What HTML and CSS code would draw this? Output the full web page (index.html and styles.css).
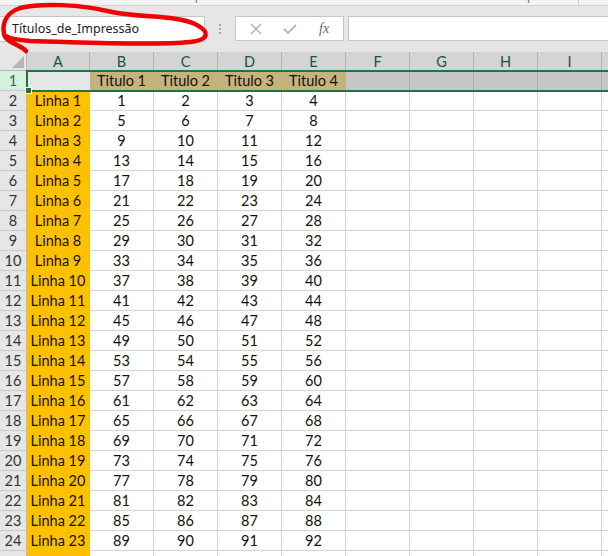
FILE: index.html
```html
<!DOCTYPE html>
<html lang="pt">
<head>
<meta charset="utf-8">
<link rel="stylesheet" href="styles.css">
</head>
<body>
<div class="app">
  <div class="ribbon">
    <span class="grp g1">Área de Transferência</span><span class="launch l1">⌐</span>
    <span class="grp g2">Tipo de Letra</span><span class="launch l2">⌐</span>
    <span class="grp g3">Alinhamento</span><span class="launch l3">⌐</span>
    <span class="grp g4">Comportamento</span><span class="sep"></span>
  </div>
  <div class="toolbar">
    <div class="namebox">Títulos_de_Impressão</div>
    <div class="dots"><i></i><i></i><i></i></div>
    <div class="fbtns">
      <svg class="ico" width="14" height="14" viewBox="0 0 14 14"><path d="M2 2 L12 12 M12 2 L2 12" stroke="#b8b8b8" stroke-width="1.6" fill="none"/></svg>
      <svg class="ico" width="16" height="14" viewBox="0 0 16 14"><path d="M2 7 L6 11 L14 3" stroke="#b8b8b8" stroke-width="1.8" fill="none"/></svg>
      <span class="fx">fx</span>
    </div>
    <div class="finput"></div>
  </div>
  <div class="sheet">
    <div class="grid">
      <div class="corner"><svg width="12" height="12" viewBox="0 0 12 12"><path d="M12 0 L12 12 L0 12 Z" fill="#b5b5b5"/></svg></div>
      <div class="ch">A</div><div class="ch">B</div><div class="ch">C</div><div class="ch">D</div><div class="ch">E</div><div class="ch">F</div><div class="ch">G</div><div class="ch">H</div><div class="ch">I</div><div class="ch">J</div>

      <div class="rh sel">1</div><div class="c s1"></div><div class="c t">Titulo 1</div><div class="c t">Titulo 2</div><div class="c t">Titulo 3</div><div class="c t">Titulo 4</div><div class="c g"></div><div class="c g"></div><div class="c g"></div><div class="c g"></div><div class="c g"></div>

      <div class="rh">2</div><div class="c a">Linha 1</div><div class="c">1</div><div class="c">2</div><div class="c">3</div><div class="c">4</div><div class="c"></div><div class="c"></div><div class="c"></div><div class="c"></div><div class="c"></div>
      <div class="rh">3</div><div class="c a">Linha 2</div><div class="c">5</div><div class="c">6</div><div class="c">7</div><div class="c">8</div><div class="c"></div><div class="c"></div><div class="c"></div><div class="c"></div><div class="c"></div>
      <div class="rh">4</div><div class="c a">Linha 3</div><div class="c">9</div><div class="c">10</div><div class="c">11</div><div class="c">12</div><div class="c"></div><div class="c"></div><div class="c"></div><div class="c"></div><div class="c"></div>
      <div class="rh">5</div><div class="c a">Linha 4</div><div class="c">13</div><div class="c">14</div><div class="c">15</div><div class="c">16</div><div class="c"></div><div class="c"></div><div class="c"></div><div class="c"></div><div class="c"></div>
      <div class="rh">6</div><div class="c a">Linha 5</div><div class="c">17</div><div class="c">18</div><div class="c">19</div><div class="c">20</div><div class="c"></div><div class="c"></div><div class="c"></div><div class="c"></div><div class="c"></div>
      <div class="rh">7</div><div class="c a">Linha 6</div><div class="c">21</div><div class="c">22</div><div class="c">23</div><div class="c">24</div><div class="c"></div><div class="c"></div><div class="c"></div><div class="c"></div><div class="c"></div>
      <div class="rh">8</div><div class="c a">Linha 7</div><div class="c">25</div><div class="c">26</div><div class="c">27</div><div class="c">28</div><div class="c"></div><div class="c"></div><div class="c"></div><div class="c"></div><div class="c"></div>
      <div class="rh">9</div><div class="c a">Linha 8</div><div class="c">29</div><div class="c">30</div><div class="c">31</div><div class="c">32</div><div class="c"></div><div class="c"></div><div class="c"></div><div class="c"></div><div class="c"></div>
      <div class="rh">10</div><div class="c a">Linha 9</div><div class="c">33</div><div class="c">34</div><div class="c">35</div><div class="c">36</div><div class="c"></div><div class="c"></div><div class="c"></div><div class="c"></div><div class="c"></div>
      <div class="rh">11</div><div class="c a">Linha 10</div><div class="c">37</div><div class="c">38</div><div class="c">39</div><div class="c">40</div><div class="c"></div><div class="c"></div><div class="c"></div><div class="c"></div><div class="c"></div>
      <div class="rh">12</div><div class="c a">Linha 11</div><div class="c">41</div><div class="c">42</div><div class="c">43</div><div class="c">44</div><div class="c"></div><div class="c"></div><div class="c"></div><div class="c"></div><div class="c"></div>
      <div class="rh">13</div><div class="c a">Linha 12</div><div class="c">45</div><div class="c">46</div><div class="c">47</div><div class="c">48</div><div class="c"></div><div class="c"></div><div class="c"></div><div class="c"></div><div class="c"></div>
      <div class="rh">14</div><div class="c a">Linha 13</div><div class="c">49</div><div class="c">50</div><div class="c">51</div><div class="c">52</div><div class="c"></div><div class="c"></div><div class="c"></div><div class="c"></div><div class="c"></div>
      <div class="rh">15</div><div class="c a">Linha 14</div><div class="c">53</div><div class="c">54</div><div class="c">55</div><div class="c">56</div><div class="c"></div><div class="c"></div><div class="c"></div><div class="c"></div><div class="c"></div>
      <div class="rh">16</div><div class="c a">Linha 15</div><div class="c">57</div><div class="c">58</div><div class="c">59</div><div class="c">60</div><div class="c"></div><div class="c"></div><div class="c"></div><div class="c"></div><div class="c"></div>
      <div class="rh">17</div><div class="c a">Linha 16</div><div class="c">61</div><div class="c">62</div><div class="c">63</div><div class="c">64</div><div class="c"></div><div class="c"></div><div class="c"></div><div class="c"></div><div class="c"></div>
      <div class="rh">18</div><div class="c a">Linha 17</div><div class="c">65</div><div class="c">66</div><div class="c">67</div><div class="c">68</div><div class="c"></div><div class="c"></div><div class="c"></div><div class="c"></div><div class="c"></div>
      <div class="rh">19</div><div class="c a">Linha 18</div><div class="c">69</div><div class="c">70</div><div class="c">71</div><div class="c">72</div><div class="c"></div><div class="c"></div><div class="c"></div><div class="c"></div><div class="c"></div>
      <div class="rh">20</div><div class="c a">Linha 19</div><div class="c">73</div><div class="c">74</div><div class="c">75</div><div class="c">76</div><div class="c"></div><div class="c"></div><div class="c"></div><div class="c"></div><div class="c"></div>
      <div class="rh">21</div><div class="c a">Linha 20</div><div class="c">77</div><div class="c">78</div><div class="c">79</div><div class="c">80</div><div class="c"></div><div class="c"></div><div class="c"></div><div class="c"></div><div class="c"></div>
      <div class="rh">22</div><div class="c a">Linha 21</div><div class="c">81</div><div class="c">82</div><div class="c">83</div><div class="c">84</div><div class="c"></div><div class="c"></div><div class="c"></div><div class="c"></div><div class="c"></div>
      <div class="rh">23</div><div class="c a">Linha 22</div><div class="c">85</div><div class="c">86</div><div class="c">87</div><div class="c">88</div><div class="c"></div><div class="c"></div><div class="c"></div><div class="c"></div><div class="c"></div>
      <div class="rh">24</div><div class="c a">Linha 23</div><div class="c">89</div><div class="c">90</div><div class="c">91</div><div class="c">92</div><div class="c"></div><div class="c"></div><div class="c"></div><div class="c"></div><div class="c"></div>
      <div class="rh"></div><div class="c a"></div><div class="c"></div><div class="c"></div><div class="c"></div><div class="c"></div><div class="c"></div><div class="c"></div><div class="c"></div><div class="c"></div><div class="c"></div>
    </div>
    <div class="selection"><span class="handle"></span></div>
  </div>
  <svg class="annot" width="220" height="56" viewBox="0 0 220 56"><path d="M26 51 C20 44 6 43 4 34 C2 23 6 13 20 8 C40 3 80 4 112 12 C142 18 176 15 195 24 C211 32 209 40 190 42 C150 46 80 42 30 41 C16 40 9 38 6 36" stroke="#f00000" stroke-width="4.5" fill="none" stroke-linecap="round" stroke-linejoin="round"/></svg>
</div>
</body>
</html>
```
FILE: styles.css
```css
* { box-sizing: border-box; }
html, body { margin: 0; padding: 0; }
body {
  width: 608px;
  height: 556px;
  overflow: hidden;
  background: #e6e6e6;
  font-family: Lato, "Liberation Sans", sans-serif;
}
.app { position: relative; width: 608px; height: 556px; overflow: hidden; }

.ribbon {
  height: 6px;
  background: #f3f3f3;
  border-bottom: 1px solid #d4d4d4;
  overflow: hidden;
  display: flex;
  font-family: "Open Sans", sans-serif;
  font-size: 12px;
  color: #6a6a6a;
}
.grp, .launch { display: block; line-height: 16px; margin-top: -12px; white-space: nowrap; }
.g1 { margin-left: -8px; width: 126px; }
.l1 { width: 67px; }
.g2 { width: 137px; }
.l2 { width: 49px; }
.g3 { width: 117px; }
.l3 { width: 13px; }
.g4 { width: 77px; }
.sep { width: 1px; height: 6px; background: #c8c8c8; }

.toolbar {
  height: 46px;
  padding-top: 10px;
  display: flex;
  align-items: flex-start;
}
.namebox {
  width: 205px;
  height: 26px;
  background: #fff;
  border: 1px solid #c6c6c6;
  border-left: none;
  padding-left: 12px;
  font-family: "Noto Sans", "Open Sans", sans-serif;
  font-size: 12.5px;
  line-height: 24px;
  color: #222;
}
.dots {
  width: 30px;
  height: 25px;
  display: flex;
  flex-direction: column;
  align-items: center;
  justify-content: center;
  gap: 2px;
}
.dots i { display: block; width: 2px; height: 2px; background: #a8a8a8; }
.fbtns {
  width: 109px;
  height: 25px;
  background: #fff;
  border: 1px solid #c6c6c6;
  display: flex;
  align-items: center;
  padding-left: 13px;
  gap: 19px;
}
.fx {
  font-family: "Liberation Serif", serif;
  font-style: italic;
  font-size: 14px;
  color: #666;
  margin-left: 2px;
}
.finput {
  flex: 1;
  margin-left: 4px;
  height: 25px;
  background: #fff;
  border: 1px solid #c6c6c6;
  border-right: none;
}

.sheet { position: relative; }
.grid {
  display: grid;
  grid-template-columns: 27px 63px repeat(9, 64px);
  grid-template-rows: 19px repeat(25, 20px);
  background: #fff;
  font-size: 14.5px;
  color: #111;
}
.corner {
  background: #e6e6e6;
  border-right: 1px solid #b8b8b8;
  border-bottom: 1px solid #b8b8b8;
  display: flex;
  align-items: flex-end;
  justify-content: flex-end;
  padding: 0 2px 2px 0;
}
.ch {
  background: #d4d4d4;
  border-right: 1px solid #b3b3b3;
  border-bottom: 1px solid #b3b3b3;
  color: #24503d;
  text-align: center;
  line-height: 19px;
  font-size: 14.5px;
}
.rh {
  background: #e6e6e6;
  border-right: 1px solid #b8b8b8;
  border-bottom: 1px solid #c9c9c9;
  color: #333;
  text-align: center;
  line-height: 20px;
  font-size: 14.5px;
  overflow: hidden;
}
.rh.sel { background: #d3f0e0; color: #217346; }
.c {
  border-right: 1px solid #d4d4d4;
  border-bottom: 1px solid #d4d4d4;
  text-align: center;
  line-height: 20px;
  white-space: nowrap;
  overflow: hidden;
}
.c.a { background: #ffc000; border-color: #ffc000; }
.c.t { background: #c5b37b; border-color: #c5b37b; }
.c.s1 { background: #e6e6e6; border-color: #e6e6e6; }
.c.g { background: #c6c6c6; border-right-color: #ababab; border-bottom-color: #c6c6c6; }

.selection {
  position: absolute;
  left: 26px;
  top: 18px;
  width: 600px;
  height: 22px;
  border: 2px solid #217346;
  border-right: none;
  pointer-events: none;
}
.handle {
  position: absolute;
  left: -3px;
  bottom: -4px;
  width: 7px;
  height: 7px;
  background: #217346;
  border: 1px solid #fff;
}
.annot { position: absolute; left: 0; top: 0; }
```
